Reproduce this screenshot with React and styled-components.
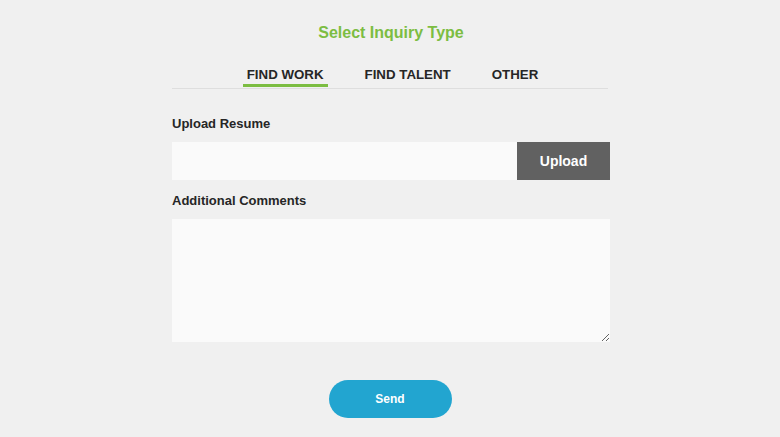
import React, { useState } from "react";
import styled, { createGlobalStyle } from "styled-components";

const GlobalStyle = createGlobalStyle`
  html, body {
    margin: 0;
    padding: 0;
    background: #f0f0f0;
    font-family: "Liberation Sans", Arial, sans-serif;
  }
`;

const Page = styled.div`
  width: 780px;
  height: 437px;
  background: #f0f0f0;
  display: flex;
  justify-content: center;
`;

const Form = styled.form`
  width: 438px;
  margin-left: 2px;
  padding-top: 23px;
  display: flex;
  flex-direction: column;
`;

const Title = styled.h2`
  margin: 0;
  text-align: center;
  color: #7cbd42;
  font-size: 16px;
  font-weight: 700;
  line-height: 20px;
`;

const Tabs = styled.div`
  margin-top: 24px;
  margin-right: 2px;
  padding-left: 5px;
  display: flex;
  justify-content: center;
  gap: 33px;
  border-bottom: 1px solid #dedede;
`;

const Tab = styled.button`
  border: none;
  background: none;
  padding: 0 4px 1px;
  margin: 0 0 1px;
  font-family: inherit;
  font-size: 13.3px;
  font-weight: 700;
  color: #262626;
  line-height: 16px;
  cursor: pointer;
  border-bottom: 3px solid ${(p) => (p.$active ? "#7cbd42" : "transparent")};
`;

const Label = styled.label`
  display: block;
  font-size: 13px;
  font-weight: 700;
  color: #262626;
  line-height: 16px;
  margin-top: ${(p) => p.$top}px;
  margin-bottom: 10px;
`;

const UploadRow = styled.div`
  display: flex;
  height: 38px;
`;

const FileInput = styled.input`
  flex: 1;
  border: none;
  outline: none;
  background: #fafafa;
  margin: 0;
  padding: 0 10px;
`;

const UploadButton = styled.button`
  width: 93px;
  border: none;
  background: #616161;
  color: #fff;
  font-family: inherit;
  font-size: 14px;
  font-weight: 700;
  cursor: pointer;
`;

const Comments = styled.textarea`
  height: 123px;
  border: none;
  outline: none;
  background: #fafafa;
  resize: vertical;
  padding: 8px 10px;
  box-sizing: border-box;
  font-family: inherit;
`;

const Send = styled.button`
  align-self: center;
  margin-top: 38px;
  margin-right: 2px;
  width: 123px;
  height: 38px;
  border: none;
  border-radius: 19px;
  background: #22a5d0;
  color: #fff;
  font-family: inherit;
  font-size: 12px;
  font-weight: 700;
  cursor: pointer;
`;

const tabs = ["FIND WORK", "FIND TALENT", "OTHER"];

export default function App() {
  const [active, setActive] = useState(0);
  return (
    <>
      <GlobalStyle />
      <Page>
        <Form onSubmit={(e) => e.preventDefault()}>
          <Title>Select Inquiry Type</Title>
          <Tabs>
            {tabs.map((t, i) => (
              <Tab
                key={t}
                type="button"
                $active={i === active}
                onClick={() => setActive(i)}
              >
                {t}
              </Tab>
            ))}
          </Tabs>
          <Label $top={27}>Upload Resume</Label>
          <UploadRow>
            <FileInput type="text" />
            <UploadButton type="button">Upload</UploadButton>
          </UploadRow>
          <Label $top={13}>Additional Comments</Label>
          <Comments />
          <Send type="submit">Send</Send>
        </Form>
      </Page>
    </>
  );
}
